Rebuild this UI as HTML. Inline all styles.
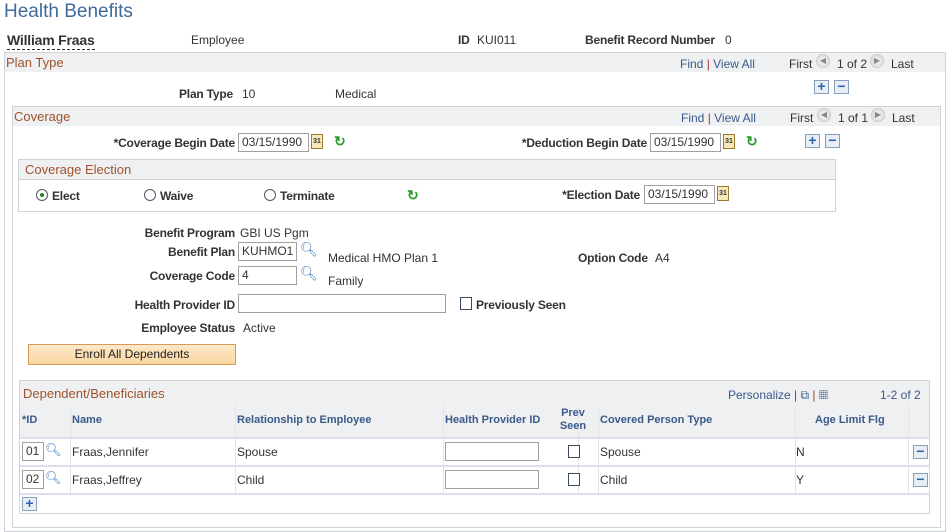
<!DOCTYPE html>
<html><head><meta charset="utf-8"><style>
*{margin:0;padding:0;box-sizing:border-box}
body{width:948px;height:532px;background:#fff;font-family:"Liberation Sans",Arial,sans-serif;font-size:12px;color:#333;position:relative;overflow:hidden}
.a{position:absolute;white-space:nowrap}
.b{font-weight:bold;color:#333;letter-spacing:-0.2px}
.r{text-align:right;width:200px}
.lk{color:#3a5a8a}
.sep{color:#a33}
.hd{color:#a0522d;font-size:13px}
.box{position:absolute;border:1px solid #cfd3d8}
.band{position:absolute;background:#eef0f2}
.inp{position:absolute;border:1px solid #a0a0a0;background:#fff;height:19px;padding:1px 3px;font-size:12px}
.pm{position:absolute;width:15px;height:14px;border:1px solid #8aa0b8;background:#e8eef5;color:#2d62b0;font-weight:bold;font-size:14px;line-height:11px;text-align:center}
.cal{position:absolute;width:12px;height:15px;border:1px solid #9a7a30;background:#f6e8b8;font-size:7px;line-height:13px;text-align:center;color:#333;font-weight:bold}
.rf{position:absolute;color:#2a9a2a;font-size:14px;font-weight:bold}
.rad{position:absolute;width:12px;height:12px;border:1px solid #556;border-radius:50%;background:#fff}
.chk{position:absolute;width:12px;height:13px;border:1px solid #3a4a5a;background:#fff}
.nav{position:absolute;width:14px;height:14px;border-radius:50%;background:radial-gradient(#f4f4f4,#d8d8d8);border:1px solid #ccc;font-size:8px;line-height:12px;text-align:center;color:#888}
.th{position:absolute;color:#3a5a8a;font-weight:bold;font-size:11px;white-space:nowrap}
</style></head><body>
<div class="a" style="left:4px;top:1px;font-size:19px;color:#3f6a9a">Health Benefits</div>
<div class="a b" style="left:7px;top:32px;font-size:14px;border-bottom:1px dashed #333;padding-bottom:1px">William Fraas</div>
<div class="a" style="left:191px;top:33px">Employee</div>
<div class="a b" style="left:458px;top:33px">ID</div>
<div class="a" style="left:477px;top:33px">KUI011</div>
<div class="a b" style="left:585px;top:33px">Benefit Record Number</div>
<div class="a" style="left:725px;top:33px">0</div>

<div class="box" style="left:4px;top:52px;width:942px;height:480px"></div>
<div class="band" style="left:5px;top:53px;width:940px;height:19px"></div>
<div class="a hd" style="left:6px;top:55px">Plan Type</div>
<div class="a lk" style="left:680px;top:57px">Find <span class="sep">|</span> View All</div>
<div class="a" style="left:789px;top:57px">First</div><div class="nav" style="left:816px;top:54px">◀</div>
<div class="a" style="left:837px;top:57px">1 of 2</div><div class="nav" style="left:870px;top:54px">▶</div>
<div class="a" style="left:891px;top:57px">Last</div>
<div class="pm" style="left:814px;top:80px">+</div><div class="pm" style="left:834px;top:80px">−</div>
<div class="a b r" style="left:33px;top:87px">Plan Type</div>
<div class="a" style="left:242px;top:87px">10</div>
<div class="a" style="left:335px;top:87px">Medical</div>

<div class="box" style="left:12px;top:106px;width:929px;height:422px"></div>
<div class="band" style="left:13px;top:107px;width:927px;height:19px"></div>
<div class="a hd" style="left:14px;top:109px">Coverage</div>
<div class="a lk" style="left:681px;top:111px">Find <span class="sep">|</span> View All</div>
<div class="a" style="left:790px;top:111px">First</div><div class="nav" style="left:817px;top:108px">◀</div>
<div class="a" style="left:838px;top:111px">1 of 1</div><div class="nav" style="left:871px;top:108px">▶</div>
<div class="a" style="left:892px;top:111px">Last</div>

<div class="a b r" style="left:35px;top:136px">*Coverage Begin Date</div>
<div class="inp" style="left:238px;top:133px;width:71px">03/15/1990</div>
<div class="cal" style="left:311px;top:134px">31</div>
<div class="rf" style="left:334px;top:133px">↻</div>
<div class="a b r" style="left:447px;top:136px">*Deduction Begin Date</div>
<div class="inp" style="left:650px;top:133px;width:71px">03/15/1990</div>
<div class="cal" style="left:723px;top:134px">31</div>
<div class="rf" style="left:746px;top:133px">↻</div>
<div class="pm" style="left:805px;top:134px">+</div><div class="pm" style="left:825px;top:134px">−</div>

<div class="box" style="left:18px;top:159px;width:818px;height:53px"></div>
<div class="band" style="left:19px;top:160px;width:816px;height:20px;border-bottom:1px solid #cfd3d8"></div>
<div class="a hd" style="left:25px;top:162px">Coverage Election</div>
<div class="rad" style="left:36px;top:189px"><div style="width:4px;height:4px;background:#2a7a2a;border-radius:50%;margin:3px"></div></div>
<div class="a b" style="left:52px;top:189px">Elect</div>
<div class="rad" style="left:144px;top:189px"></div><div class="a b" style="left:160px;top:189px">Waive</div>
<div class="rad" style="left:264px;top:189px"></div><div class="a b" style="left:280px;top:189px">Terminate</div>
<div class="rf" style="left:407px;top:187px">↻</div>
<div class="a b r" style="left:440px;top:188px">*Election Date</div>
<div class="inp" style="left:644px;top:185px;width:71px">03/15/1990</div>
<div class="cal" style="left:717px;top:186px">31</div>

<div class="a b r" style="left:35px;top:226px">Benefit Program</div><div class="a" style="left:240px;top:226px">GBI US Pgm</div>
<div class="a b r" style="left:35px;top:245px">Benefit Plan</div>
<div class="inp" style="left:238px;top:242px;width:59px">KUHMO1</div>
<div class="a" style="left:300px;top:241px;color:#3a7ac0;font-size:14px">🔍&#xFE0E;</div>
<div class="a" style="left:328px;top:251px">Medical HMO Plan 1</div>
<div class="a b" style="left:578px;top:251px">Option Code</div><div class="a" style="left:655px;top:251px">A4</div>
<div class="a b r" style="left:35px;top:269px">Coverage Code</div>
<div class="inp" style="left:238px;top:266px;width:59px">4</div>
<div class="a" style="left:300px;top:265px;color:#3a7ac0;font-size:14px">🔍&#xFE0E;</div>
<div class="a" style="left:328px;top:274px">Family</div>
<div class="a b r" style="left:35px;top:298px">Health Provider ID</div>
<div class="inp" style="left:238px;top:294px;width:208px"></div>
<div class="chk" style="left:460px;top:297px"></div>
<div class="a b" style="left:476px;top:298px">Previously Seen</div>
<div class="a b r" style="left:35px;top:321px">Employee Status</div><div class="a" style="left:243px;top:321px">Active</div>
<div class="a" style="left:28px;top:344px;width:208px;height:21px;border:1px solid #d89a5a;background:linear-gradient(#fde9c8,#f8d6a0);text-align:center;line-height:19px;color:#222">Enroll All Dependents</div>

<div class="box" style="left:19px;top:380px;width:911px;height:134px"></div>
<div class="band" style="left:20px;top:381px;width:909px;height:24px"></div>
<div class="a hd" style="left:23px;top:386px">Dependent/Beneficiaries</div>
<div class="a lk" style="left:728px;top:388px">Personalize <span class="sep">|</span> ⧉ <span class="sep">|</span> ▦</div>
<div class="a" style="left:880px;top:388px;color:#3a5a8a">1-2 of 2</div>
<div class="band" style="left:20px;top:405px;width:909px;height:32px;background:#eef0f2"></div>
<div style="position:absolute;left:20px;top:405px;width:909px;height:99px">
 <div class="a" style="left:50px;top:0;width:1px;height:90px;background:#e2e4e8"></div>
 <div class="a" style="left:215px;top:0;width:1px;height:90px;background:#e2e4e8"></div>
 <div class="a" style="left:423px;top:0;width:1px;height:90px;background:#e2e4e8"></div>
 <div class="a" style="left:558px;top:0;width:1px;height:90px;background:#e2e4e8"></div>
 <div class="a" style="left:578px;top:0;width:1px;height:90px;background:#e2e4e8"></div>
 <div class="a" style="left:775px;top:0;width:1px;height:90px;background:#e2e4e8"></div>
 <div class="a" style="left:888px;top:0;width:1px;height:90px;background:#e2e4e8"></div>
 <div class="a" style="left:0;top:32px;width:909px;height:2px;background:#dde"></div>
 <div class="a" style="left:0;top:60px;width:909px;height:2px;background:#dde"></div>
 <div class="a" style="left:0;top:88px;width:909px;height:2px;background:#dde"></div>
</div>
<div class="th" style="left:22px;top:414px">*ID</div>
<div class="th" style="left:72px;top:414px">Name</div>
<div class="th" style="left:237px;top:414px">Relationship to Employee</div>
<div class="th" style="left:445px;top:414px">Health Provider ID</div>
<div class="th" style="left:558px;top:407px;text-align:center;width:30px;white-space:normal;line-height:13px">Prev Seen</div>
<div class="th" style="left:600px;top:414px">Covered Person Type</div>
<div class="th" style="left:815px;top:414px">Age Limit Flg</div>

<div class="inp" style="left:22px;top:442px;width:22px;height:19px">01</div>
<div class="a" style="left:45px;top:442px;color:#3a7ac0;font-size:13px">🔍&#xFE0E;</div>
<div class="a" style="left:72px;top:445px">Fraas,Jennifer</div>
<div class="a" style="left:237px;top:445px">Spouse</div>
<div class="inp" style="left:445px;top:442px;width:94px"></div>
<div class="chk" style="left:568px;top:445px"></div>
<div class="a" style="left:600px;top:445px">Spouse</div>
<div class="a" style="left:796px;top:445px">N</div>
<div class="pm" style="left:913px;top:445px">−</div>

<div class="inp" style="left:22px;top:470px;width:22px;height:19px">02</div>
<div class="a" style="left:45px;top:470px;color:#3a7ac0;font-size:13px">🔍&#xFE0E;</div>
<div class="a" style="left:72px;top:473px">Fraas,Jeffrey</div>
<div class="a" style="left:237px;top:473px">Child</div>
<div class="inp" style="left:445px;top:470px;width:94px"></div>
<div class="chk" style="left:568px;top:473px"></div>
<div class="a" style="left:600px;top:473px">Child</div>
<div class="a" style="left:796px;top:473px">Y</div>
<div class="pm" style="left:913px;top:473px">−</div>
<div class="pm" style="left:22px;top:497px">+</div>
</body></html>
